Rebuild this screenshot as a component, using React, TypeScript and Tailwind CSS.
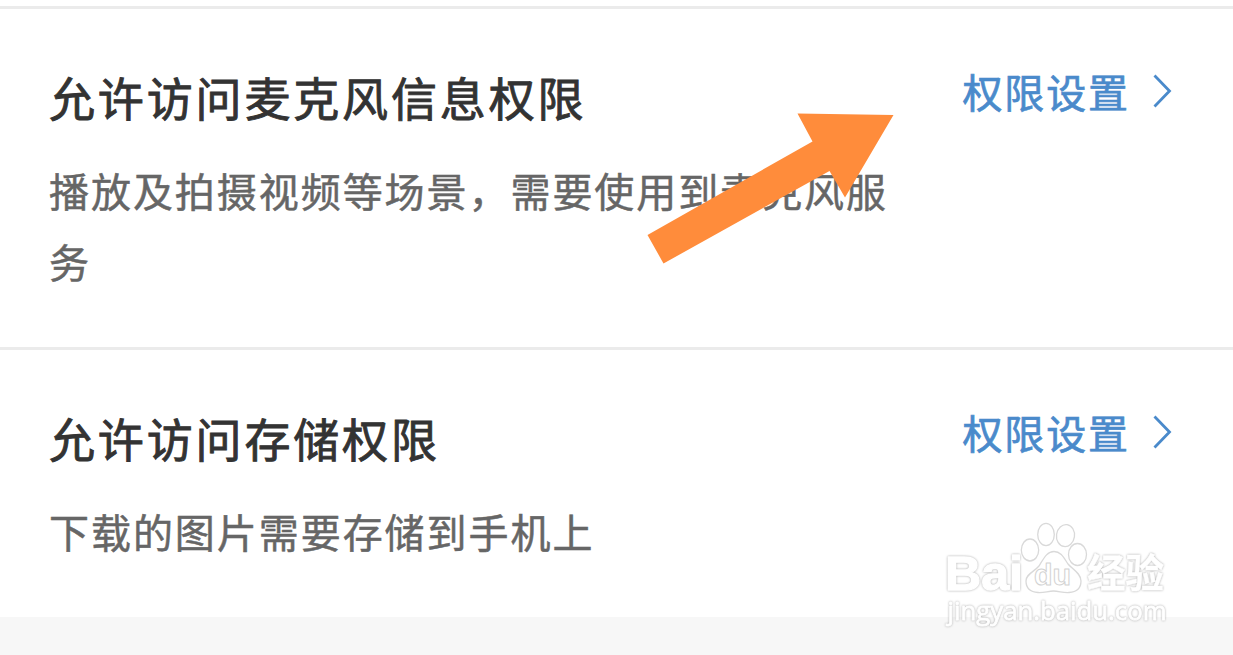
type PermissionProps = { title: string; lines: string[] };

function Permission({ title, lines }: PermissionProps) {
  return (
    <section className="flex h-[341px] items-start justify-between border-t-3 border-[#ebebeb] pr-[60px] pl-[49px]">
      <div className="pt-[51px]">
        <h2 className="h-[72px] text-[46px] leading-[72px] font-normal tracking-[2.85px] whitespace-nowrap text-[#333] [-webkit-text-stroke:0.9px_#333]">
          {title}
        </h2>
        <div className="pt-[23px] text-[40px] leading-[71px] tracking-[1.95px] whitespace-nowrap text-[#666] [-webkit-text-stroke:0.5px_#666]">
          {lines.map((line) => (
            <p key={line}>{line}</p>
          ))}
        </div>
      </div>
      <a className="flex items-center pt-[52px] text-[#4a8acb]">
        <span className="text-[40px] leading-[60px] tracking-[1.9px] [-webkit-text-stroke:0.7px_#4a8acb]">权限设置</span>
        <svg className="ml-[23px] h-[34px] w-[20px]" viewBox="0 0 20 34" fill="none" stroke="currentColor" strokeWidth="2.8">
          <path d="M1.500 1.500 16.500 17 1.500 32.500" />
        </svg>
      </a>
    </section>
  );
}

function Watermark() {
  return (
    <svg
      className="absolute top-[510px] left-[930px] h-[145px] w-[250px]"
      viewBox="0 0 250 145"
      fill="#fff"
      stroke="#d9d9d9"
      strokeWidth="1.3"
      strokeLinejoin="round"
    >
      <g stroke="#fff" className="[filter:drop-shadow(0_0_0.8px_#aaa)]">
        <text x="15" y="80" fontSize="48" fontWeight="700" textLength="78" lengthAdjust="spacingAndGlyphs" fontFamily="Liberation Sans, sans-serif">Bai</text>
        <text x="157" y="77" fontSize="39" fontWeight="700" strokeWidth="0.5" textLength="77" lengthAdjust="spacingAndGlyphs" fontFamily="Noto Sans CJK SC, sans-serif">经验</text>
        <text x="17.5" y="110" fontSize="25" textLength="219" lengthAdjust="spacingAndGlyphs" fontFamily="Open Sans, sans-serif" strokeWidth="0.8">jingyan.baidu.com</text>
      </g>
      <ellipse cx="100" cy="40" rx="8.7" ry="11" />
      <ellipse cx="116" cy="24.5" rx="8.3" ry="11.2" />
      <ellipse cx="135.5" cy="25.5" rx="9" ry="11" transform="rotate(8 135 25.5)" />
      <ellipse cx="147.5" cy="44.5" rx="9" ry="11" />
      <path d="M109 56C114 48 117 41.500 124 41.500C131 41.500 134 48 138 54C142 59 151 63 151 71C151 78 147 82 139 82.500C133 83 129 81 123.500 81C118 81 114 83 108 82.500C100 82 96 78 96 71C96 64 104 62 109 56Z" />
      <text x="104" y="75" fontSize="30" fontWeight="700" textLength="37" lengthAdjust="spacingAndGlyphs" fontFamily="Liberation Sans, sans-serif" stroke="#d2d2d2" strokeWidth="1">du</text>
    </svg>
  );
}

export default function App() {
  return (
    <main className="relative h-[655px] w-[1233px] overflow-hidden bg-[#f7f7f7] font-['Noto_Sans_CJK_SC',sans-serif]">
      <div className="h-[617px] overflow-hidden bg-white pt-[6px]">
        <Permission title="允许访问麦克风信息权限" lines={["播放及拍摄视频等场景，需要使用到麦克风服", "务"]} />
        <Permission title="允许访问存储权限" lines={["下载的图片需要存储到手机上"]} />
      </div>
      <svg className="absolute top-[100px] left-[630px] h-[170px] w-[280px]" viewBox="0 0 280 170" fill="#ff8c3b">
        <path d="M167.5 13.5 263.5 15 215 97.5 199.5 71 33.5 163.5 17.5 135 182.5 41.5Z" />
      </svg>
      <Watermark />
    </main>
  );
}
